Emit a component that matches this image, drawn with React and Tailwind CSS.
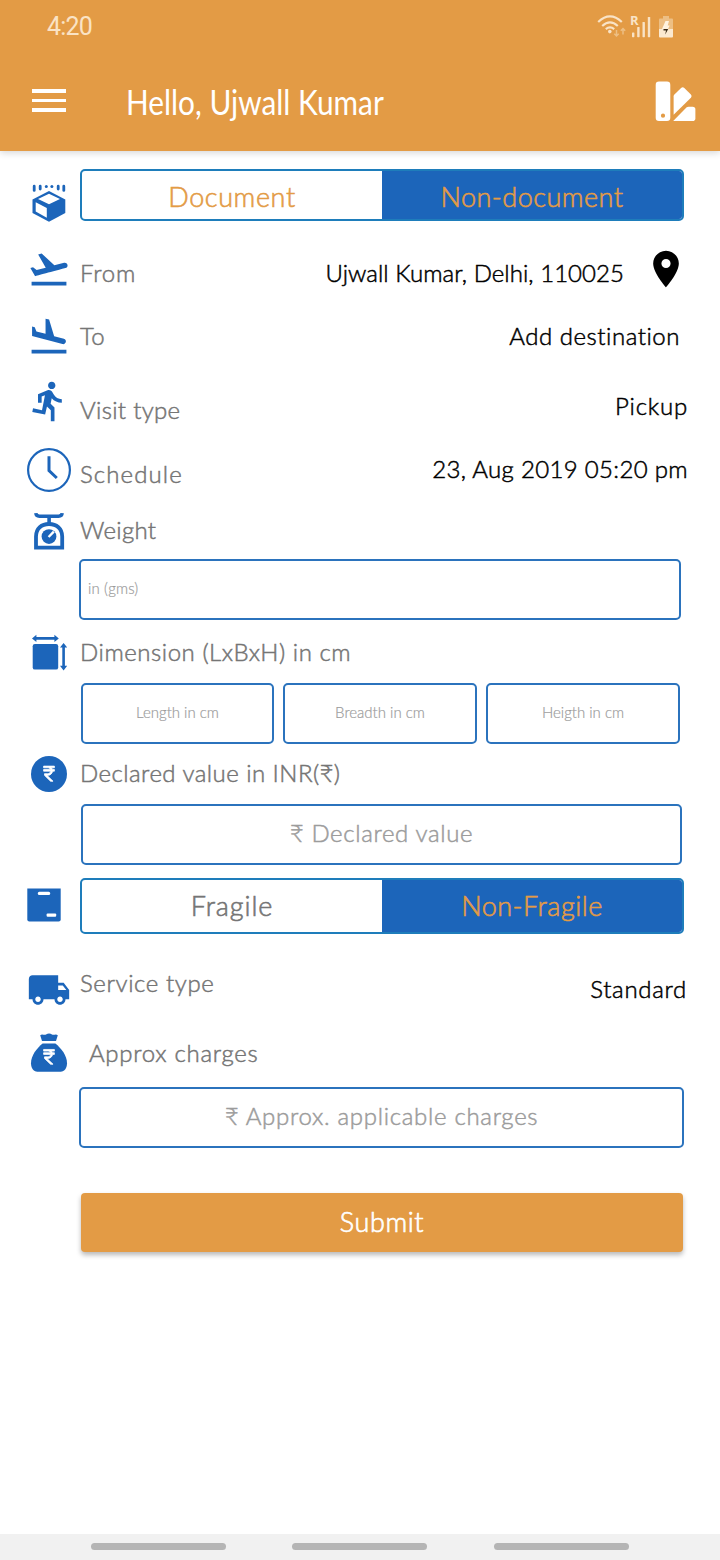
import React from "react";
import { MdFlightTakeoff, MdFlightLand, MdDirectionsRun, MdPlace, MdLocalShipping } from "react-icons/md";

const BLUE = "#1c65ba";
const RUPEE =
  "M13.66 7c-.56-1.18-1.76-2-3.16-2H6V3h12v2h-3.26c.48.58.84 1.26 1.05 2H18v2h-2.02c-.25 2.8-2.61 5-5.48 5h-.73l6.73 7h-2.77L7 14v-2h3.5c1.76 0 3.22-1.3 3.46-3H6V7h7.66z";

function Glyph({ children }) {
  return (
    <svg width="44" height="44" viewBox="0 0 44 44" fill={BLUE}>
      {children}
    </svg>
  );
}

const ParcelIcon = () => (
  <Glyph>
    <g stroke={BLUE} strokeWidth="2.8" strokeLinecap="round">
      <path d="M7.2 6.2v4.200M13.2 6.200v2.900M31.200 6.200v2.900M36.800 6.200v4.200" />
    </g>
    <circle cx="19.3" cy="6.4" r="1.5" />
    <circle cx="24.9" cy="6.4" r="1.5" />
    <path d="M22 11 38.3 19.6V33L22 41.8 5.5 33V19.6z" />
    <path d="M22 13.8 33 19 22 24.2 11 19zM8.7 22.2 19.8 28v9.8L8.7 31.6z" fill="#fff" />
  </Glyph>
);

const ClockIcon = () => (
  <Glyph>
    <circle cx="22" cy="22" r="20.9" fill="none" stroke={BLUE} strokeWidth="2.2" />
    <path d="M22 8.2V22.6L29.8 30" fill="none" stroke={BLUE} strokeWidth="3" />
  </Glyph>
);

const ScaleIcon = () => (
  <Glyph>
    <path d="M8.8 4.2C9 6.6 10.4 7.2 12.4 7.2H31.6C33.6 7.2 35 6.6 35.2 4.2" fill="none" stroke={BLUE} strokeWidth="3.4" />
    <path d="M20.300 7h3.600v8h-3.600z" />
    <path d="M9 38.600V27.600C9 19.500 14.600 15 22 15S35.200 19.500 35.200 27.600V38.600z" fill="none" stroke={BLUE} strokeWidth="3.800" />
    <circle cx="22" cy="27.600" r="7.400" />
    <path d="M21.600 28 26.800 22.600" stroke="#fff" strokeWidth="2.400" />
  </Glyph>
);

const DimensionIcon = () => (
  <Glyph>
    <rect x="5.7" y="13" width="25.5" height="25.6" rx="2.2" />
    <path d="M8.6 7.400H28.600M36.600 15.800V36" stroke={BLUE} strokeWidth="2.600" />
    <path d="M5 7.400 9.400 3.700V11.100zM31.800 7.400 27.400 3.700V11.100zM36.600 12 40.200 16.600H33zM36.600 39.400 40.200 34.800H33z" />
  </Glyph>
);

const RupeeIcon = () => (
  <Glyph>
    <circle cx="22" cy="22" r="18" />
    <path d={RUPEE} fill="#fff" stroke="#fff" strokeWidth=".9" transform="translate(11.2 11.6) scale(.9 .84)" />
  </Glyph>
);

const BoxIcon = () => (
  <Glyph>
    <path d="M.3 5.5H33.7V36.5a2 2 0 0 1-2 2H2.3a2 2 0 0 1-2-2z" />
    <rect x="10.8" y="8.8" width="12.4" height="3.1" rx="1.5" fill="#fff" />
    <rect x="19.6" y="30.6" width="9.6" height="3.1" rx="1" fill="#fff" />
  </Glyph>
);

const BagIcon = () => (
  <Glyph>
    <path d="M13.2 5.2C15 3.7 17 5.3 19 4.6 21 3.1 23.2 3.1 25 4.6 27 5.3 29 3.7 30.8 5.2L29 11H15z" />
    <path d="M15.6 13.4H28.4C34 18 40 25 40 33.2 40 38 37.6 41.7 33.6 41.7H10.4C6.4 41.7 4 38 4 33.2 4 25 10 18 15.6 13.4z" />
    <path d={RUPEE} fill="#fff" stroke="#fff" strokeWidth=".9" transform="translate(11.2 17) scale(.9 .82)" />
  </Glyph>
);

function StatusIcons() {
  return (
    <svg width="80" height="28" viewBox="596 12 80 28" className="ml-auto mr-11 mt-3">
      <g fill="none" stroke="#f9e3c6" strokeWidth="2.2">
        <path d="M598.2 22Q610 10.800 621.800 22M602.200 26Q610 18.600 617.800 26M605.800 29.200Q610 25.600 614.200 29.200" />
      </g>
      <circle cx="609.800" cy="31.600" r="1.800" fill="#f9e3c6" />
      <path d="M616.500 30v6M614.300 33.800l2.200 2.200 2.200-2.200M623 34.500v-6M620.800 30.700l2.200-2.200 2.200 2.200" fill="none" stroke="#edbf84" strokeWidth="1.500" />
      <text x="630" y="25" fontSize="13" fontWeight="700" fontFamily="Open Sans, sans-serif" fill="#f9e3c6">R</text>
      <g fill="#f9e3c6">
        <rect x="632" y="32.500" width="2.400" height="4.700" rx=".6" />
        <rect x="637.200" y="27" width="2.400" height="10.200" rx=".6" />
        <rect x="642.500" y="22" width="2.400" height="15.200" rx=".6" />
        <rect x="647.800" y="17" width="2.400" height="20.200" rx=".6" />
      </g>
      <path d="M659 19.500q0-1 1-1h3V16h6v2.500h3q1 0 1 1V29h-14z" fill="#edbf84" />
      <path d="M659 29h14v7.500q0 1-1 1h-12q-1 0-1-1z" fill="#fbe9d0" />
      <path d="M665.500 21h3.500l-1.300 4.500h2L668 29h-6z" fill="#fff3df" />
      <path d="M663.500 29h4.700l-3 5.600.8-4h-2.500z" fill="#3a2a14" />
    </svg>
  );
}

function SwatchIcon() {
  return (
    <svg width="42" height="42" viewBox="0 0 42 42" fill="#fff" className="ml-auto mr-[23px] mt-[27px]">
      <path fillRule="evenodd" d="M4 1.600h8a3.300 3.300 0 0 1 3.300 3.300v32.800a3.300 3.300 0 0 1-3.300 3.300H4A3.300 3.300 0 0 1 .7 37.700V4.900A3.300 3.300 0 0 1 4 1.600zM8 33.600a2 2 0 1 0 0 4.200 2 2 0 0 0 0-4.200z" />
      <path d="M18.600 16.400q0-1 .8-1.800l6.700-6.700q1.600-1.500 3.200 0l6.600 6.600q1.500 1.600 0 3.200L18.600 34.800z" />
      <path d="M18.200 41 31.400 27.600q.9-.9 2.200-.9h4q2.800 0 2.800 2.800V38.200q0 2.800-2.800 2.800z" />
    </svg>
  );
}

function Row({ icon, iconTop, label, labelCls, value, valueCls, height }) {
  return (
    <div className={`flex items-start text-[24px] leading-8 ${height}`}>
      <div className={`w-[53px] ml-[27px] shrink-0 ${iconTop}`}>{icon}</div>
      <div className={`whitespace-nowrap text-[#757575] ${labelCls}`}>{label}</div>
      {value && <div className={`ml-auto whitespace-nowrap text-black ${valueCls}`}>{value}</div>}
    </div>
  );
}

function Field({ text, cls }) {
  return (
    <div className={`flex h-[61px] items-center rounded-[5px] border-2 border-[#2b73bd] whitespace-nowrap pb-[3px] text-[#9c9c9c] ${cls}`}>
      <span>{text}</span>
    </div>
  );
}

function Segment({ left, right, cls, leftCls, rightCls }) {
  return (
    <div className={`flex w-[604px] overflow-hidden rounded-[5px] border-2 border-[#1e7dbb] text-[27px] leading-8 [-webkit-text-stroke:0.6px] ${cls}`}>
      <div className={`flex w-[300px] items-center justify-center ${leftCls}`}>{left}</div>
      <div className={`flex flex-1 items-center justify-center bg-[#1c65ba] text-[#e39b45] ${rightCls}`}>{right}</div>
    </div>
  );
}

export default function App() {
  return (
    <div className="flex h-[1560px] w-[720px] flex-col overflow-hidden bg-white font-['Lato','Noto_Sans',sans-serif]">
      <header className="h-[151px] shrink-0 bg-[#e39b45] shadow-[0_2px_7px_rgba(0,0,0,0.16)]">
        <div className="flex h-[53px] items-start">
          <span className="ml-[47px] mt-[11px] text-[25px] leading-8 text-[#fae3c5] font-['Roboto',sans-serif] tracking-[-0.8px]">4:20</span>
          <StatusIcons />
        </div>
        <div className="flex h-[98px] items-start">
          <div className="ml-8 mt-9 flex w-[34px] flex-col gap-[6px]">
            <div className="h-[3.700px] bg-white" />
            <div className="h-[3.700px] bg-white" />
            <div className="h-[3.700px] bg-white" />
          </div>
          <h1 className="ml-[60px] mt-[29px] origin-left scale-x-[0.877] whitespace-nowrap text-[34px] leading-10 text-white">Hello, Ujwall Kumar</h1>
          <SwatchIcon />
        </div>
      </header>

      <main className="flex flex-1 flex-col font-light [-webkit-text-stroke:0.5px]">
        <div className="flex h-[88px] items-start">
          <div className="ml-[27px] mt-[29px] w-[53px]"><ParcelIcon /></div>
          <Segment left="Document" right="Non-document" cls="mt-[18px] h-[52px]" leftCls="pt-[4px] text-[#e39b45] tracking-[0.6px]" rightCls="pt-[4px] tracking-[0.5px]" />
        </div>
        <div className="flex h-[66px] items-start text-[24px] leading-8">
          <div className="ml-[27px] mt-[8px] w-[53px]"><MdFlightTakeoff size={44} color={BLUE} /></div>
          <div className="mt-[18px] text-[#757575] tracking-[0.8px]">From</div>
          <div className="ml-auto mt-[18px] text-black tracking-[0.05px]">Ujwall Kumar, Delhi, 110025</div>
          <MdPlace size={44} color="#000" className="ml-5 mr-8 mt-2" />
        </div>
        <Row height="h-[65px]" icon={<MdFlightLand size={44} color={BLUE} />} iconTop="mt-[10px]" label="To" labelCls="mt-[15px] tracking-[0.4px]" value="Add destination" valueCls="mt-[15px] mr-10 tracking-[0.53px]" />
        <Row height="h-[68px]" icon={<MdDirectionsRun size={44} color={BLUE} />} iconTop="mt-[9px]" label="Visit type" labelCls="mt-[24px] tracking-[0.3px]" value="Pickup" valueCls="mt-[20px] mr-8 tracking-[0.8px]" />
        <Row height="h-[65px]" icon={<ClockIcon />} iconTop="mt-[10px]" label="Schedule" labelCls="mt-[20px] tracking-[1.1px]" value="23, Aug 2019 05:20 pm" valueCls="mt-[15px] mr-8 tracking-[0.33px]" />
        <Row height="h-[56px]" icon={<ScaleIcon />} iconTop="mt-[6px]" label="Weight" labelCls="mt-[11px] tracking-[0.3px]" />
        <Field text="in (gms)" cls="ml-[79px] w-[602px] pl-[7px] text-[15px] tracking-[0.15px] [-webkit-text-stroke:0.2px]" />
        <Row height="h-[63px]" icon={<DimensionIcon />} iconTop="mt-[11px]" label="Dimension (LxBxH) in cm" labelCls="mt-[16px] tracking-[0.54px]" />
        <div className="ml-[81px] flex w-[599px] text-[15px] [-webkit-text-stroke:0.2px]">
          <Field text="Length in cm" cls="w-[193px] justify-center" />
          <Field text="Breadth in cm" cls="ml-[9px] w-[194px] justify-center" />
          <Field text="Heigth in cm" cls="ml-[9px] w-[194px] justify-center" />
        </div>
        <Row height="h-[60px]" icon={<RupeeIcon />} iconTop="mt-[8px]" label="Declared value in INR(₹)" labelCls="mt-[13px] tracking-[0.46px]" />
        <Field text="₹ Declared value" cls="ml-[81px] w-[601px] justify-center text-[24px] tracking-[0.65px]" />
        <div className="flex h-[83px] items-start">
          <div className="ml-[27px] mt-[18px] w-[53px]"><BoxIcon /></div>
          <Segment left="Fragile" right="Non-Fragile" cls="mt-[13px] h-[56px]" leftCls="text-[#757575] tracking-[0.9px]" rightCls="tracking-[0.5px]" />
        </div>
        <Row height="h-[74px]" icon={<MdLocalShipping size={44} color={BLUE} />} iconTop="mt-[20px]" label="Service type" labelCls="mt-[19px] tracking-[0.6px]" value="Standard" valueCls="mt-[25px] mr-[33px] tracking-[0.7px]" />
        <Row height="h-[65px]" icon={<BagIcon />} iconTop="mt-[8px]" label="Approx charges" labelCls="ml-[9px] mt-[15px] tracking-[0.7px]" />
        <Field text="₹ Approx. applicable charges" cls="ml-[79px] w-[605px] justify-center text-[24px] tracking-[0.7px]" />
        <button className="ml-[81px] mt-[45px] h-[59px] w-[602px] rounded-[4px] bg-[#e39b45] text-[27px] text-white tracking-[0.6px] shadow-[0_3px_5px_rgba(0,0,0,0.28)] [-webkit-text-stroke:0.7px]">Submit</button>
      </main>

      <nav className="flex h-[26px] shrink-0 items-center bg-[#f1f1f1] pb-px pl-[91px]">
        <div className="h-[7px] w-[135px] rounded-full bg-[#b5b5b5]" />
        <div className="ml-[66px] h-[7px] w-[135px] rounded-full bg-[#b5b5b5]" />
        <div className="ml-[67px] h-[7px] w-[135px] rounded-full bg-[#b5b5b5]" />
      </nav>
    </div>
  );
}
